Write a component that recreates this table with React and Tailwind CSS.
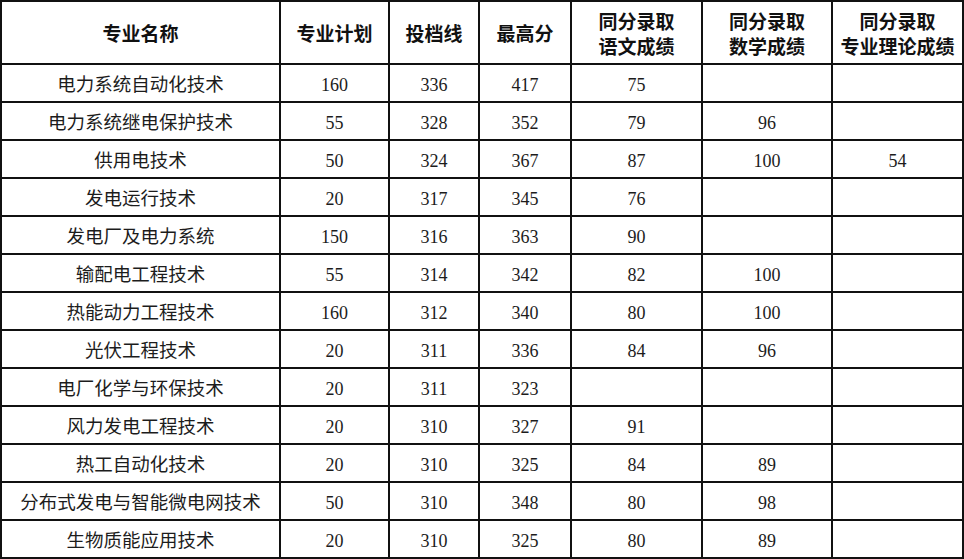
import React from "react";

const rows = [
  ["电力系统自动化技术", "160", "336", "417", "75", "", ""],
  ["电力系统继电保护技术", "55", "328", "352", "79", "96", ""],
  ["供用电技术", "50", "324", "367", "87", "100", "54"],
  ["发电运行技术", "20", "317", "345", "76", "", ""],
  ["发电厂及电力系统", "150", "316", "363", "90", "", ""],
  ["输配电工程技术", "55", "314", "342", "82", "100", ""],
  ["热能动力工程技术", "160", "312", "340", "80", "100", ""],
  ["光伏工程技术", "20", "311", "336", "84", "96", ""],
  ["电厂化学与环保技术", "20", "311", "323", "", "", ""],
  ["风力发电工程技术", "20", "310", "327", "91", "", ""],
  ["热工自动化技术", "20", "310", "325", "84", "89", ""],
  ["分布式发电与智能微电网技术", "50", "310", "348", "80", "98", ""],
  ["生物质能应用技术", "20", "310", "325", "80", "89", ""],
];

const headers = [
  ["专业名称"],
  ["专业计划"],
  ["投档线"],
  ["最高分"],
  ["同分录取", "语文成绩"],
  ["同分录取", "数学成绩"],
  ["同分录取", "专业理论成绩"],
];

export default function App() {
  return (
    <div className="w-[964px] h-[559px] bg-white overflow-hidden">
      <div
        className="grid grid-cols-[279px_109px_90px_92px_131px_130px_131px] grid-rows-[63px_repeat(13,38px)] border-l-2 border-t-2 border-[#111] text-[#1c1c1c]"
        style={{ fontFamily: '"Liberation Serif", "Noto Sans CJK SC", serif' }}
      >
        {headers.map((h, i) => (
          <div
            key={"h" + i}
            className="border-r-2 border-b-2 border-[#111] flex flex-col items-center justify-center pt-[4px] text-[19px] leading-[25px] font-bold text-[#111]"
          >
            {h.map((t, j) => (
              <span key={j} className="whitespace-nowrap">{t}</span>
            ))}
          </div>
        ))}
        {rows.map((r, ri) =>
          r.map((c, ci) => (
            <div
              key={ri + "-" + ci}
              className={
                "border-r-2 border-b-2 border-[#111] flex items-center justify-center pt-[4px] leading-none whitespace-nowrap " +
                (ci === 0 ? "text-[18.5px]" : "text-[18px]")
              }
            >
              {c}
            </div>
          ))
        )}
      </div>
    </div>
  );
}
